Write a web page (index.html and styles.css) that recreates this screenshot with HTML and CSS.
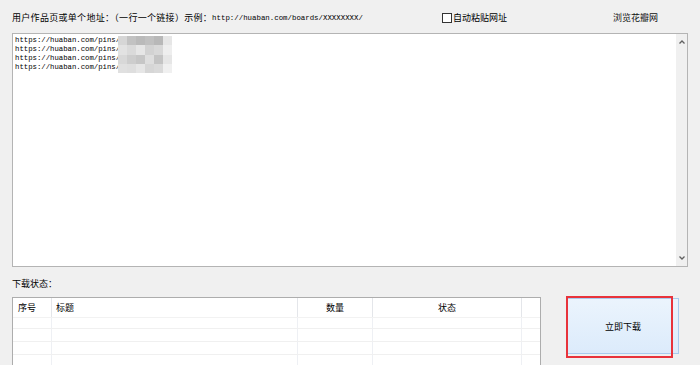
FILE: index.html
```html
<!DOCTYPE html>
<html lang="zh-CN">
<head>
<meta charset="utf-8">
<title>花瓣下载</title>
<link rel="stylesheet" href="styles.css">
</head>
<body>
<div class="app">
  <div class="toprow">
    <div class="label"><span class="cjk wide">用户作品页或单个地址：（一行一个链接）示例：</span><span class="mono url">http://huaban.com/boards/XXXXXXXX/</span></div>
    <label class="check"><span class="box"></span><span class="cjk">自动粘贴网址</span></label>
    <div class="link cjk">浏览花瓣网</div>
  </div>

  <div class="editor">
    <div class="text">
      <div class="line mono">https://huaban.com/pins/</div>
      <div class="line mono">https://huaban.com/pins/</div>
      <div class="line mono">https://huaban.com/pins/</div>
      <div class="line mono">https://huaban.com/pins/</div>
      <div class="mosaic">
        <i style="background:#d6d6d6"></i><i style="background:#c2c2c2"></i><i style="background:#bababa"></i><i style="background:#c0c0c0"></i><i style="background:#b8b8b8"></i><i style="background:#e6e6e6"></i>
        <i style="background:#e2e2e2"></i><i style="background:#dadada"></i><i style="background:#e6e6e6"></i><i style="background:#d2d2d2"></i><i style="background:#d8d8d8"></i><i style="background:#eeeeee"></i>
        <i style="background:#d8d8d8"></i><i style="background:#cdcdcd"></i><i style="background:#c6c6c6"></i><i style="background:#dedede"></i><i style="background:#c4c4c4"></i><i style="background:#e6e6e6"></i>
        <i style="background:#e0e0e0"></i><i style="background:#dedede"></i><i style="background:#e6e6e6"></i><i style="background:#d6d6d6"></i><i style="background:#dadada"></i><i style="background:#f0f0f0"></i>
      </div>
    </div>
    <div class="scrollbar">
      <svg class="arrow" width="12" height="12" viewBox="0 0 12 12"><polyline points="3.5,7.5 6,5 8.5,7.5" fill="none" stroke="#606060" stroke-width="1.3"/></svg>
      <svg class="arrow" width="12" height="12" viewBox="0 0 12 12"><polyline points="3.5,4.5 6,7 8.5,4.5" fill="none" stroke="#606060" stroke-width="1.3"/></svg>
    </div>
  </div>

  <div class="status cjk">下载状态：</div>

  <div class="bottom">
    <div class="list">
      <div class="row head cjk">
        <div class="c c1">序号</div>
        <div class="c c2">标题</div>
        <div class="c c3 center">数量</div>
        <div class="c c4 center">状态</div>
        <div class="c c5"></div>
      </div>
      <div class="row"><div class="c c1"></div><div class="c c2"></div><div class="c c3"></div><div class="c c4"></div><div class="c c5"></div></div>
      <div class="row"><div class="c c1"></div><div class="c c2"></div><div class="c c3"></div><div class="c c4"></div><div class="c c5"></div></div>
      <div class="row"><div class="c c1"></div><div class="c c2"></div><div class="c c3"></div><div class="c c4"></div><div class="c c5"></div></div>
      <div class="row"><div class="c c1"></div><div class="c c2"></div><div class="c c3"></div><div class="c c4"></div><div class="c c5"></div></div>
    </div>
    <div class="btnwrap">
      <button class="btn cjk">立即下载</button>
      <div class="highlight"></div>
    </div>
  </div>
</div>
</body>
</html>
```

FILE: styles.css
```css
html, body {
  margin: 0;
  padding: 0;
  background: #f0f0f0;
  overflow: hidden;
}
body {
  width: 700px;
  height: 365px;
  color: #000;
  font-family: "Noto Sans CJK SC", "Liberation Sans", sans-serif;
}
.cjk {
  font-family: "Noto Sans CJK SC", "Liberation Sans", sans-serif;
  font-size: 9px;
}
.wide {
  letter-spacing: 0.3px;
}
.mono {
  font-family: "Liberation Mono", "Noto Sans CJK SC", monospace;
  font-size: 7.3px;
  color: #000;
}
.url {
  font-size: 7.4px;
}
.app {
  display: flex;
  flex-direction: column;
}
.toprow {
  height: 33px;
  display: flex;
  align-items: center;
  padding-left: 12px;
  padding-top: 2px;
  box-sizing: border-box;
}
.label {
  flex: 0 0 430px;
  white-space: nowrap;
  line-height: 12px;
  display: flex;
  align-items: center;
}
.check {
  flex: 0 0 171px;
  display: flex;
  align-items: center;
  gap: 1px;
  line-height: 12px;
}
.box {
  width: 8px;
  height: 8px;
  border: 1px solid #333;
  background: #fff;
}
.link {
  line-height: 12px;
  color: #111;
}
.editor {
  margin: 0 12px;
  height: 234px;
  box-sizing: border-box;
  border: 1px solid #b4b4b4;
  background: #fff;
  display: flex;
}
.text {
  flex: 1;
  position: relative;
  padding: 2px 0 0 2px;
}
.line {
  line-height: 9px;
  height: 9px;
  white-space: nowrap;
}
.mosaic {
  position: absolute;
  left: 105px;
  top: 2px;
  width: 54px;
  height: 37px;
  display: grid;
  grid-template-columns: repeat(6, 1fr);
  grid-template-rows: repeat(4, 1fr);
}
.mosaic i {
  display: block;
}
.scrollbar {
  width: 11px;
  background: #f0f0f0;
  display: flex;
  flex-direction: column;
  justify-content: space-between;
  align-items: center;
  padding: 2px 0 2px;
}
.arrow {
  display: block;
}
.status {
  height: 30px;
  line-height: 30px;
  padding-left: 12px;
  box-sizing: border-box;
  padding-top: 2px;
}
.bottom {
  display: flex;
  align-items: flex-start;
  padding-left: 12px;
}
.list {
  width: 529px;
  box-sizing: border-box;
  border: 1px solid #adadad;
  border-bottom: none;
  background: #fff;
  height: 80px;
}
.row {
  display: grid;
  grid-template-columns: 39px 246px 75px 149px 1fr;
  height: 12px;
  border-bottom: 1px solid #f0f0f0;
}
.row.head {
  height: 19px;
  border-bottom: 1px solid #f2f2f2;
  background: #fff;
}
.row.head + .row {
  height: 10px;
}
.c {
  border-right: 1px solid #eef0f4;
  padding-left: 5px;
  line-height: 19px;
  white-space: nowrap;
  overflow: hidden;
}
.head .c {
  border-right-color: #e4e6ea;
}
.head .c2 {
  padding-left: 4px;
}
.c5 {
  border-right: none;
}
.center {
  text-align: center;
  padding-left: 0;
}
.btnwrap {
  margin-left: 25px;
  margin-top: -1px;
  position: relative;
  width: 113px;
  height: 63px;
}
.btn {
  position: absolute;
  left: 1px;
  top: 2px;
  width: 112px;
  height: 56px;
  box-sizing: border-box;
  border: 1px solid #a9cbee;
  background: linear-gradient(#ebf4fd, #dcebfb);
  color: #000;
  padding: 0;
  margin: 0;
}
.highlight {
  position: absolute;
  left: 0;
  top: 0;
  width: 107px;
  height: 62px;
  box-sizing: border-box;
  border: 2px solid #e8333b;
  pointer-events: none;
}
```
